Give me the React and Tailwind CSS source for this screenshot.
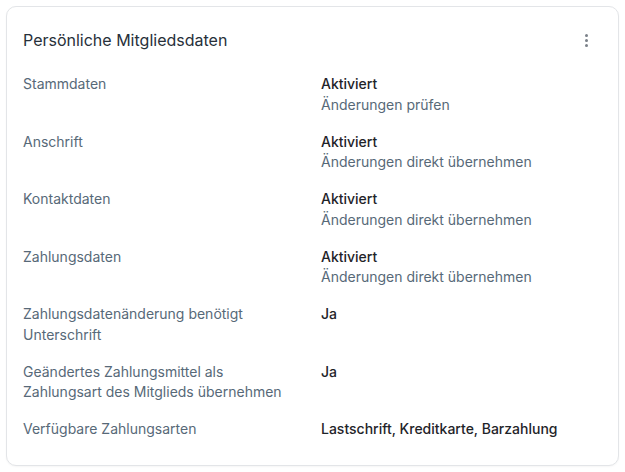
import React from 'react';

const rows = [
  { label: 'Stammdaten', value: 'Aktiviert', note: 'Änderungen prüfen' },
  { label: 'Anschrift', value: 'Aktiviert', note: 'Änderungen direkt übernehmen' },
  { label: 'Kontaktdaten', value: 'Aktiviert', note: 'Änderungen direkt übernehmen' },
  { label: 'Zahlungsdaten', value: 'Aktiviert', note: 'Änderungen direkt übernehmen' },
  { label: 'Zahlungsdatenänderung benötigt Unterschrift', value: 'Ja' },
  { label: 'Geändertes Zahlungsmittel als Zahlungsart des Mitglieds übernehmen', value: 'Ja' },
  { label: 'Verfügbare Zahlungsarten', value: 'Lastschrift, Kreditkarte, Barzahlung' },
];

const App = () => {
  return (
    <div className="min-h-screen bg-white p-[6px]" style={{ fontFamily: 'Inter, "Noto Sans", sans-serif' }}>
      <div className="w-[613px] h-[460px] rounded-[10px] border border-[#e3e5e8] bg-white shadow-[0_1px_2px_rgba(0,0,0,0.04)]">
        {/* Header */}
        <div className="flex items-center justify-between pl-[16px] pr-[26px] pt-[21px] pb-[22px]">
          <h2 className="text-[16px] leading-6 text-[#27303a]">Persönliche Mitgliedsdaten</h2>
          <button className="flex flex-col gap-[2px] items-center p-1">
            <span className="w-[3px] h-[3px] rounded-full bg-[#7b8189]" />
            <span className="w-[3px] h-[3px] rounded-full bg-[#7b8189]" />
            <span className="w-[3px] h-[3px] rounded-full bg-[#7b8189]" />
          </button>
        </div>

        {/* Rows */}
        <div className="flex flex-col gap-[16.5px] pl-[16px] pr-6">
          {rows.map((row) => (
            <div key={row.label} className="grid grid-cols-[298px_1fr] text-[14px] leading-[20.5px]">
              <div className="text-[#576978] max-w-[272px]">{row.label}</div>
              <div>
                <div className="font-medium text-[#1f2429]">{row.value}</div>
                {row.note && <div className="text-[#576978]">{row.note}</div>}
              </div>
            </div>
          ))}
        </div>
      </div>
    </div>
  );
};

export default App;
